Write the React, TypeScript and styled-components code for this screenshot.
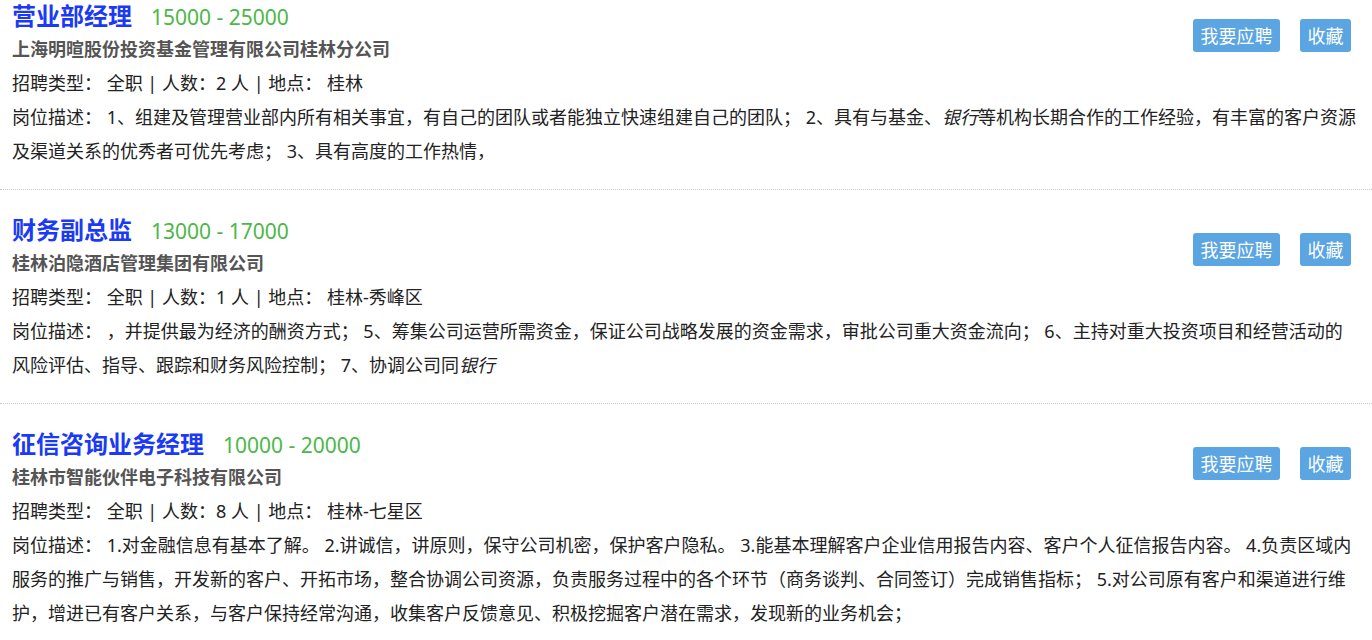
import * as React from 'react';
import styled, { createGlobalStyle } from 'styled-components';

const GlobalStyle = createGlobalStyle`
  html {
    scrollbar-width: none;
  }
  ::-webkit-scrollbar {
    display: none;
  }
  body {
    margin: 0;
    background: #fff;
    color: #222;
    font-family: 'Noto Sans', 'Noto Sans CJK SC', sans-serif;
  }
`;

const List = styled.div`
  display: flex;
  flex-direction: column;
`;

const Item = styled.div`
  padding: 24px 12px 21px;
  border-bottom: 1px dotted #c8c8c8;

  &:first-child {
    padding-top: 0;
  }
`;

const Head = styled.div`
  display: flex;
  justify-content: space-between;
  align-items: flex-start;
`;

const Info = styled.div`
  display: flex;
  flex-direction: column;
`;

const TitleRow = styled.div`
  display: flex;
  align-items: baseline;
  height: 32px;
  padding-top: 1px;
  box-sizing: border-box;
`;

const Title = styled.a`
  font-family: 'Noto Sans CJK SC', sans-serif;
  font-size: 24px;
  font-weight: bold;
  line-height: 28px;
  color: #1a3af5;
  text-decoration: none;
`;

const Salary = styled.span`
  margin-left: 19px;
  font-size: 21px;
  line-height: 28px;
  color: #4cb748;
`;

const Company = styled.div`
  font-size: 18px;
  font-weight: bold;
  line-height: 34px;
  color: #555;
`;

const Line = styled.div`
  font-size: 18px;
  line-height: 34px;
  color: #222;

  em {
    font-style: italic;
  }
`;

const Actions = styled.div`
  display: flex;
  gap: 20px;
  margin-top: 19px;
  margin-right: 9px;
`;

const Button = styled.button`
  height: 33px;
  padding: 0 7.5px;
  border: none;
  border-radius: 3px;
  background: #5ba5e2;
  color: #fff;
  font-family: 'Noto Sans CJK SC', sans-serif;
  font-size: 18px;
  line-height: 33px;
  cursor: pointer;
`;

interface Job {
  title: string;
  salary: string;
  company: string;
  count: number;
  place: string;
  desc: React.ReactNode;
}

const jobs: Job[] = [
  {
    title: '营业部经理',
    salary: '15000 - 25000',
    company: '上海明暄股份投资基金管理有限公司桂林分公司',
    count: 2,
    place: '桂林',
    desc: (
      <>
        1、组建及管理营业部内所有相关事宜，有自己的团队或者能独立快速组建自己的团队； 2、具有与基金、<em>银行</em>
        等机构长期合作的工作经验，有丰富的客户资源及渠道关系的优秀者可优先考虑； 3、具有高度的工作热情，
      </>
    ),
  },
  {
    title: '财务副总监',
    salary: '13000 - 17000',
    company: '桂林泊隐酒店管理集团有限公司',
    count: 1,
    place: '桂林-秀峰区',
    desc: (
      <>
        ，并提供最为经济的酬资方式； 5、筹集公司运营所需资金，保证公司战略发展的资金需求，审批公司重大资金流向； 6、主持对重大投资项目和经营活动的风险评估、指导、跟踪和财务风险控制； 7、协调公司同
        <em>银行</em>
      </>
    ),
  },
  {
    title: '征信咨询业务经理',
    salary: '10000 - 20000',
    company: '桂林市智能伙伴电子科技有限公司',
    count: 8,
    place: '桂林-七星区',
    desc: (
      <>
        1.对金融信息有基本了解。 2.讲诚信，讲原则，保守公司机密，保护客户隐私。 3.能基本理解客户企业信用报告内容、客户个人征信报告内容。 4.负责区域内服务的推广与销售，开发新的客户、开拓市场，整合协调公司资源，负责服务过程中的各个环节（商务谈判、合同签订）完成销售指标； 5.对公司原有客户和渠道进行维护，增进已有客户关系，与客户保持经常沟通，收集客户反馈意见、积极挖掘客户潜在需求，发现新的业务机会；
      </>
    ),
  },
];

export default function App() {
  return (
    <>
      <GlobalStyle />
      <List>
        {jobs.map((job) => (
          <Item key={job.title}>
            <Head>
              <Info>
                <TitleRow>
                  <Title href="#">{job.title}</Title>
                  <Salary>{job.salary}</Salary>
                </TitleRow>
                <Company>{job.company}</Company>
                <Line>
                  招聘类型： 全职 | 人数：{job.count} 人 | 地点： {job.place}
                </Line>
              </Info>
              <Actions>
                <Button>我要应聘</Button>
                <Button>收藏</Button>
              </Actions>
            </Head>
            <Line>岗位描述： {job.desc}</Line>
          </Item>
        ))}
      </List>
    </>
  );
}
